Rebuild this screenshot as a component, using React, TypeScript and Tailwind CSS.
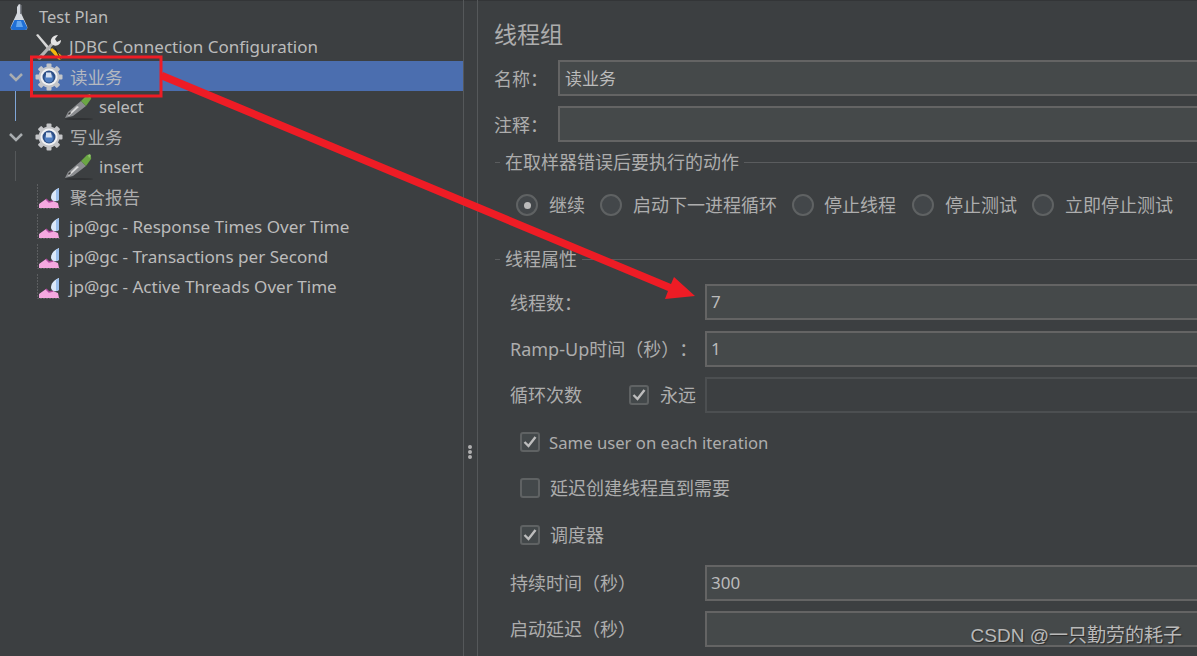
import type { ReactNode } from "react";

const FONT = "font-['Noto_Sans','Noto_Sans_CJK_SC',sans-serif]";

const Flask = () => (
  <svg width="20" height="28" viewBox="0 0 20 28">
    <path d="M10 1l2 1v8l6 13c1 2 0 4-2 4H4c-2 0-3-2-2-4l6-13V4z" fill="#d4d8de" />
    <path d="M11 2h1.500v9H11z" fill="#7c8088" />
    <path d="M5.500 17h9l3.500 7c.5 1.500-.5 3-2 3H4c-1.500 0-2.500-1.500-2-3z" fill="#1f6fd6" />
    <path d="M8 18h4l2 6H7z" fill="#62a6f0" />
  </svg>
);

const Tools = () => (
  <svg width="28" height="28" viewBox="0 0 28 28">
    <path d="M1 2l2-1 13 15-2 2z" fill="#d8d8d8" />
    <path d="M15 17l2-2 9 7c1 1 1 3 0 4s-2 1-3 0z" fill="#f2b90f" />
    <path d="M19 14l2.500 2.500L26 26l-1 0z" fill="#1c1c1c" />
    <path d="M3 24L17 9l2 2L6 26c-1 1-3 .5-3.500-.5z" fill="#b4b4b4" />
    <path d="M16 10c-1-4 2-8 7-8l-3 4 2 3 4-2c0 4-4 7-8 5z" fill="#e4e4e4" />
    <path d="M3 25l3-3 1 1-3 3z" fill="#555" />
  </svg>
);

const Gear = () => (
  <svg width="28" height="28" viewBox="0 0 28 28">
    <g fill="#c4c5c8">
      <circle cx="14" cy="14" r="10.500" />
      <rect x="11.500" y="0.500" width="5" height="27" rx="1" />
      <rect x="11.500" y="0.500" width="5" height="27" rx="1" transform="rotate(45 14 14)" />
      <rect x="11.500" y="0.500" width="5" height="27" rx="1" transform="rotate(90 14 14)" />
      <rect x="11.500" y="0.500" width="5" height="27" rx="1" transform="rotate(135 14 14)" />
    </g>
    <circle cx="14" cy="14" r="8.500" fill="#f0f1f3" />
    <circle cx="14" cy="14" r="6.500" fill="#2d4f86" />
    <circle cx="14" cy="15" r="4.500" fill="#4f7dc0" />
    <path d="M11 9.500h5l1 5h-6z" fill="#d5e0f0" />
  </svg>
);

const Pipette = () => (
  <svg width="30" height="28" viewBox="0 0 30 28">
    <ellipse cx="15" cy="26" rx="14" ry="1" fill="#2f3133" />
    <path d="M1 25l3-6L17 8l5 5L9 23z" fill="#8b8d90" />
    <path d="M4 22l9-9 2 1-10 9z" fill="#dcdcdc" />
    <path d="M6 19l1 1-2 2-1-1z" fill="#3a3a3a" />
    <path d="M17 8l6-6c2-1 5 2 4 4l-5 7z" fill="#6ba644" />
    <path d="M24 2l2-1 1 2-2 2z" fill="#8fc86a" />
  </svg>
);

const Graph = () => (
  <svg width="26" height="26" viewBox="0 0 26 26">
    <path d="M1.500 0v24.500H25" stroke="#5c5e60" strokeWidth="1" strokeDasharray="2 1" fill="none" />
    <path d="M3 24v-4l7-5 3 3 4-1 5 2 1 5z" fill="#f5a8e0" />
    <path d="M10 15l3 3 4-1" stroke="#b04aa0" strokeWidth="1.500" fill="none" />
    <path d="M15 14c0-5 3-8 8-10v12c-3 2-7 2-8-2z" fill="#dbe9fb" />
    <path d="M20 6l3-2v12l-3 1z" fill="#9cc0ee" />
  </svg>
);

const Chevron = () => (
  <svg width="16" height="10" viewBox="0 0 16 10" fill="none">
    <path d="M2 2l6 6 6-6" stroke="#a9adb0" strokeWidth="2.500" />
  </svg>
);

const Check = () => (
  <svg width="14" height="12" viewBox="0 0 14 12" fill="none">
    <path d="M1.500 6l4 4 7-9" stroke="#bdbdbd" strokeWidth="2.400" />
  </svg>
);

const TreeRow = ({
  className,
  children,
}: {
  className?: string;
  children: ReactNode;
}) => (
  <div className={`flex items-center h-[30px] pt-[2px] shrink-0 text-[#bbbbbb] text-[17px] whitespace-nowrap ${className ?? ""}`}>
    {children}
  </div>
);

const Box = ({ value, className }: { value?: ReactNode; className?: string }) => (
  <div
    className={`flex items-center h-[36px] flex-1 -mr-[4px] border-2 pl-[4px] text-[17px] text-[#bbbbbb] ${
      className ?? "border-[#646464] bg-[#45494a]"
    }`}
  >
    {value}
  </div>
);

const CheckBox = ({ on = true }: { on?: boolean }) => (
  <div className="flex items-center justify-center w-[20px] h-[20px] shrink-0 rounded-[3px] border-2 border-[#5f6263] bg-[#43484a]">
    {on && <Check />}
  </div>
);

const Radio = ({ on = false }: { on?: boolean }) => (
  <div className="flex items-center justify-center w-[22px] h-[22px] shrink-0 rounded-full border-2 border-[#5f6263] bg-[#43474a]">
    {on && <div className="w-[7px] h-[7px] rounded-full bg-[#bbbbbb]" />}
  </div>
);

const GroupTitle = ({ text, className }: { text: string; className?: string }) => (
  <div className={`flex items-center h-[20px] gap-[5px] ml-px ${className ?? ""}`}>
    <div className="w-[5px] h-px bg-[#5a5c5e]" />
    <span className="text-[18px]">{text}</span>
    <div className="flex-1 h-px bg-[#5a5c5e]" />
  </div>
);

const Tree = () => (
  <div className="flex flex-col w-[463px] shrink-0 pt-px">
    <TreeRow className="pl-[9px]">
      <Flask />
      <span className="ml-[10px] text-[16.500px]">Test Plan</span>
    </TreeRow>
    <TreeRow className="pl-[35px]">
      <Tools />
      <span className="ml-[6px]">JDBC Connection Configuration</span>
    </TreeRow>
    <TreeRow className="pl-[8px] bg-[#4b6eaf]">
      <Chevron />
      <span className="ml-[11px]"><Gear /></span>
      <span className="ml-[7px] text-[17.500px] text-[#b4b8c0]">读业务</span>
    </TreeRow>
    <TreeRow className="pl-[15px]">
      <div className="w-px self-stretch -mt-[2px] bg-[#7fa6d8]" />
      <span className="ml-[48px]"><Pipette /></span>
      <span className="ml-[5px] text-[16.500px]">select</span>
    </TreeRow>
    <TreeRow className="pl-[8px]">
      <Chevron />
      <span className="ml-[11px]"><Gear /></span>
      <span className="ml-[7px] text-[17.500px] text-[#adadad]">写业务</span>
    </TreeRow>
    <TreeRow className="pl-[15px]">
      <div className="w-px self-stretch -mt-[2px] bg-[#55585a]" />
      <span className="ml-[48px]"><Pipette /></span>
      <span className="ml-[5px] text-[16.500px]">insert</span>
    </TreeRow>
    <TreeRow className="pl-[36px]">
      <Graph />
      <span className="ml-[8px] text-[17.500px] text-[#adadad]">聚合报告</span>
    </TreeRow>
    <TreeRow className="pl-[36px]">
      <Graph />
      <span className="ml-[7px] text-[17.100px]">jp@gc - Response Times Over Time</span>
    </TreeRow>
    <TreeRow className="pl-[36px]">
      <Graph />
      <span className="ml-[7px] text-[17.100px]">jp@gc - Transactions per Second</span>
    </TreeRow>
    <TreeRow className="pl-[36px]">
      <Graph />
      <span className="ml-[7px] text-[17.100px]">jp@gc - Active Threads Over Time</span>
    </TreeRow>
  </div>
);

const Divider = () => (
  <div className="flex flex-col items-center justify-center w-[15px] shrink-0 border-x border-[#55585a]">
    <div className="mt-[248px] flex flex-col gap-[1px] -ml-px">
      <div className="w-[4px] h-[4px] rounded-full bg-[#b0b0b0]" />
      <div className="w-[4px] h-[4px] rounded-full bg-[#b0b0b0]" />
      <div className="w-[4px] h-[4px] rounded-full bg-[#b0b0b0]" />
    </div>
  </div>
);

const Form = () => (
  <div className="flex flex-col flex-1 min-w-0 pl-[16px] text-[#adadad] text-[18px] whitespace-nowrap [text-spacing-trim:space-all]">
    <div className="h-[36px] mt-[16px] flex items-center text-[23px]">线程组</div>
    <div className="flex items-center mt-[8px]">
      <span className="w-[64px] pt-[2px]">名称：</span>
      <Box value={<span className="pt-[2px] pl-px">读业务</span>} />
    </div>
    <div className="flex items-center mt-[10px]">
      <span className="w-[64px] pt-[2px]">注释：</span>
      <Box />
    </div>

    <GroupTitle text="在取样器错误后要执行的动作" className="mt-[10px]" />
    <div className="flex items-center mt-[21px] ml-[22px] h-[24px]">
      <Radio on />
      <span className="ml-[11px]">继续</span>
      <span className="ml-[15px]"><Radio /></span>
      <span className="ml-[11px]">启动下一进程循环</span>
      <span className="ml-[15px]"><Radio /></span>
      <span className="ml-[10px]">停止线程</span>
      <span className="ml-[16px]"><Radio /></span>
      <span className="ml-[11px]">停止测试</span>
      <span className="ml-[15px]"><Radio /></span>
      <span className="ml-[11px]">立即停止测试</span>
    </div>

    <GroupTitle text="线程属性" className="mt-[32px]" />
    <div className="flex items-center mt-[15px] ml-[16px]">
      <span className="w-[195px] pt-[2px]">线程数：</span>
      <Box value="7" />
    </div>
    <div className="flex items-center mt-[11px] ml-[16px]">
      <span className="w-[195px]">Ramp-Up时间（秒）：</span>
      <Box value="1" />
    </div>
    <div className="flex items-center mt-[10px] ml-[16px]">
      <span className="w-[119px]">循环次数</span>
      <CheckBox />
      <span className="ml-[11px] w-[45px]">永远</span>
      <Box className="border-[#4c4f51] bg-[#3c3f41]" />
    </div>
    <div className="flex items-center mt-[19px] ml-[26px] h-[20px]">
      <CheckBox />
      <span className="ml-[9px] pt-[2px] text-[16.700px]">Same user on each iteration</span>
    </div>
    <div className="flex items-center mt-[26px] ml-[26px] h-[20px]">
      <CheckBox on={false} />
      <span className="ml-[10px]">延迟创建线程直到需要</span>
    </div>
    <div className="flex items-center mt-[27px] ml-[26px] h-[20px]">
      <CheckBox />
      <span className="ml-[10px]">调度器</span>
    </div>
    <div className="flex items-center mt-[20px] ml-[16px]">
      <span className="w-[195px]">持续时间（秒）</span>
      <Box value="300" />
    </div>
    <div className="flex items-center mt-[10px] ml-[16px]">
      <span className="w-[195px]">启动延迟（秒）</span>
      <Box />
    </div>
  </div>
);

const Annotation = () => (
  <svg className="absolute inset-0 pointer-events-none" width="1197" height="656" viewBox="0 0 1197 656">
    <rect x="31.500" y="57" width="129.500" height="39" fill="none" stroke="#ee1c25" strokeWidth="3" />
    <path d="M163 72L671 284l3-7 21 19-30 3 3-8L160 79z" fill="#ee1c25" />
  </svg>
);

export default function App() {
  return (
    <div className={`relative flex w-[1197px] h-[656px] overflow-hidden bg-[#3c3f41] shadow-[inset_0_1px_0_#333537] ${FONT}`}>
      <Tree />
      <Divider />
      <Form />
      <Annotation />
      <div className="absolute right-[15px] bottom-[7px] text-[19px] leading-[26px] text-[#b9b9b9] font-['Liberation_Sans','Noto_Sans_CJK_SC',sans-serif] [text-shadow:1px_1px_1px_#2a2a2a]">
        CSDN @一只勤劳的耗子
      </div>
    </div>
  );
}
